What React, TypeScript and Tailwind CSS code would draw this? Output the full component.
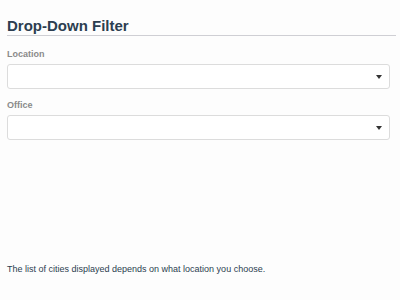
import React from "react";

function Select() {
  return (
    <div className="mt-[4px] h-[25px] w-[383px] rounded-[3px] border border-[#dcdcdc] bg-white flex items-center justify-end pr-[7px]">
      <svg width="6" height="4" viewBox="0 0 6 4" className="block">
        <path d="M0 0 H6 L3 4 Z" fill="#333" />
      </svg>
    </div>
  );
}

export default function App() {
  return (
    <div
      className="w-[400px] h-[300px] bg-[#fdfdfd] pl-[7px] flex flex-col"
      style={{ fontFamily: '"Liberation Sans", Arial, sans-serif' }}
    >
      <h1 className="mt-[17px] w-[389px] text-[15px] leading-[18px] font-bold text-[#2c3e50] border-b border-[#cfcfd4]">
        Drop-Down Filter
      </h1>
      <div className="mt-[13px] text-[9px] leading-[11px] font-bold text-[#8a8a8a]">Location</div>
      <Select />
      <div className="mt-[11px] text-[9px] leading-[11px] font-bold text-[#8a8a8a]">Office</div>
      <Select />
      <p className="mt-auto mb-[25px] text-[9px] leading-[12px] text-[#2c3e50]">
        The list of cities displayed depends on what location you choose.
      </p>
    </div>
  );
}
